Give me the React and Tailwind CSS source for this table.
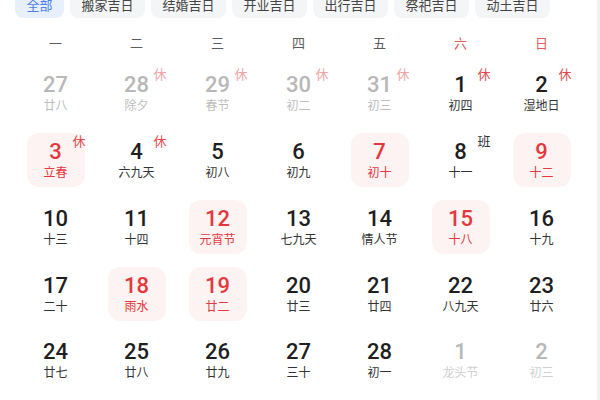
import React from "react";

const tabs = ["全部", "搬家吉日", "结婚吉日", "开业吉日", "出行吉日", "祭祀吉日", "动土吉日"];
const weeks = ["一", "二", "三", "四", "五", "六", "日"];

const rows = [
  [
    { d: "27", l: "廿八", f: true },
    { d: "28", l: "除夕", f: true, b: "休" },
    { d: "29", l: "春节", f: true, b: "休" },
    { d: "30", l: "初二", f: true, b: "休" },
    { d: "31", l: "初三", f: true, b: "休" },
    { d: "1", l: "初四", b: "休" },
    { d: "2", l: "湿地日", b: "休" },
  ],
  [
    { d: "3", l: "立春", h: true, b: "休" },
    { d: "4", l: "六九天", b: "休" },
    { d: "5", l: "初八" },
    { d: "6", l: "初九" },
    { d: "7", l: "初十", h: true },
    { d: "8", l: "十一", b: "班" },
    { d: "9", l: "十二", h: true },
  ],
  [
    { d: "10", l: "十三" },
    { d: "11", l: "十四" },
    { d: "12", l: "元宵节", h: true },
    { d: "13", l: "七九天" },
    { d: "14", l: "情人节" },
    { d: "15", l: "十八", h: true },
    { d: "16", l: "十九" },
  ],
  [
    { d: "17", l: "二十" },
    { d: "18", l: "雨水", h: true },
    { d: "19", l: "廿二", h: true },
    { d: "20", l: "廿三" },
    { d: "21", l: "廿四" },
    { d: "22", l: "八九天" },
    { d: "23", l: "廿六" },
  ],
  [
    { d: "24", l: "廿七" },
    { d: "25", l: "廿八" },
    { d: "26", l: "廿九" },
    { d: "27", l: "三十" },
    { d: "28", l: "初一" },
    { d: "1", l: "龙头节", f: true, x: true },
    { d: "2", l: "初三", f: true, x: true },
  ],
];

const cjk = { fontFamily: '"Noto Sans CJK SC", "Noto Sans", sans-serif' };
const num = { fontFamily: 'Roboto, "Noto Sans", sans-serif' };

function Cell({ c }) {
  const numColor = c.h ? "text-[#e4383d]" : c.f ? "text-[#b8b8b8]" : "text-[#1f1f1f]";
  const lunColor = c.h
    ? "text-[#e4383d]"
    : c.x
    ? "text-[#cfcfcf]"
    : c.f
    ? "text-[#bdbdbd]"
    : "text-[#333333]";
  const badgeColor =
    c.b === "班" ? "text-[#333333]" : c.f ? "text-[#f3a3a3]" : "text-[#e5484d]";
  return (
    <div className="h-[66.75px] flex items-center justify-center">
      <div
        className={`relative w-[58px] h-[54px] rounded-xl flex flex-col items-center justify-center ${
          c.h ? "bg-[#fdf3f3]" : ""
        }`}
      >
        <div className={`text-[22px] leading-[24px] font-medium ${numColor}`} style={num}>
          {c.d}
        </div>
        <div className={`text-[12px] leading-[16px] ${lunColor}`} style={cjk}>
          {c.l}
        </div>
        {c.b && (
          <div
            className={`absolute left-[46px] top-[0px] text-[13px] leading-[16px] ${badgeColor}`}
            style={cjk}
          >
            {c.b}
          </div>
        )}
      </div>
    </div>
  );
}

export default function App() {
  return (
    <div className="w-[600px] h-[400px] overflow-hidden bg-white flex">
      <div className="w-[597px] h-full flex flex-col">
        <div className="flex gap-[6px] pl-[15px] mt-[-9px]">
          {tabs.map((t, i) => (
            <div
              key={t}
              className={`h-[27px] rounded-lg flex items-center justify-center text-[13px] ${
                i === 0
                  ? "w-[49px] bg-[#e9f0fd] text-[#4a7fe8]"
                  : "w-[75px] bg-[#f4f5f7] text-[#444444]"
              }`}
              style={cjk}
            >
              {t}
            </div>
          ))}
        </div>
        <div className="ml-[15px] w-[567px] grid grid-cols-7 h-[26px] mt-[12px]">
          {weeks.map((w, i) => (
            <div
              key={w}
              className={`flex items-center justify-center text-[13px] ${
                i >= 5 ? "text-[#e25c5c]" : "text-[#5c5c5c]"
              }`}
              style={cjk}
            >
              {w}
            </div>
          ))}
        </div>
        <div className="ml-[15px] w-[567px] grid grid-cols-7 mt-[4px]">
          {rows.flat().map((c, i) => (
            <Cell key={i} c={c} />
          ))}
        </div>
      </div>
      <div className="w-[3px] h-full bg-[#f1f1f1]" />
    </div>
  );
}
